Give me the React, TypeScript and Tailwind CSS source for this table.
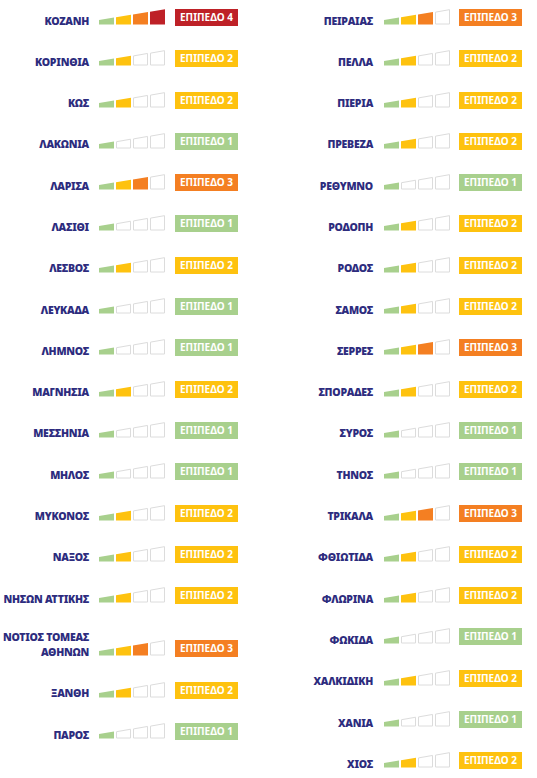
const levelColors = ["#a8d08d", "#fec20f", "#f47f22", "#be2127"]

type Area = { name: string; level: number }

const leftAreas: Area[] = [
  { name: "ΚΟΖΑΝΗ", level: 4 },
  { name: "ΚΟΡΙΝΘΙΑ", level: 2 },
  { name: "ΚΩΣ", level: 2 },
  { name: "ΛΑΚΩΝΙΑ", level: 1 },
  { name: "ΛΑΡΙΣΑ", level: 3 },
  { name: "ΛΑΣΙΘΙ", level: 1 },
  { name: "ΛΕΣΒΟΣ", level: 2 },
  { name: "ΛΕΥΚΑΔΑ", level: 1 },
  { name: "ΛΗΜΝΟΣ", level: 1 },
  { name: "ΜΑΓΝΗΣΙΑ", level: 2 },
  { name: "ΜΕΣΣΗΝΙΑ", level: 1 },
  { name: "ΜΗΛΟΣ", level: 1 },
  { name: "ΜΥΚΟΝΟΣ", level: 2 },
  { name: "ΝΑΞΟΣ", level: 2 },
  { name: "ΝΗΣΩΝ ΑΤΤΙΚΗΣ", level: 2 },
  { name: "ΝΟΤΙΟΣ ΤΟΜΕΑΣ\nΑΘΗΝΩΝ", level: 3 },
  { name: "ΞΑΝΘΗ", level: 2 },
  { name: "ΠΑΡΟΣ", level: 1 },
]

const rightAreas: Area[] = [
  { name: "ΠΕΙΡΑΙΑΣ", level: 3 },
  { name: "ΠΕΛΛΑ", level: 2 },
  { name: "ΠΙΕΡΙΑ", level: 2 },
  { name: "ΠΡΕΒΕΖΑ", level: 2 },
  { name: "ΡΕΘΥΜΝΟ", level: 1 },
  { name: "ΡΟΔΟΠΗ", level: 2 },
  { name: "ΡΟΔΟΣ", level: 2 },
  { name: "ΣΑΜΟΣ", level: 2 },
  { name: "ΣΕΡΡΕΣ", level: 3 },
  { name: "ΣΠΟΡΑΔΕΣ", level: 2 },
  { name: "ΣΥΡΟΣ", level: 1 },
  { name: "ΤΗΝΟΣ", level: 1 },
  { name: "ΤΡΙΚΑΛΑ", level: 3 },
  { name: "ΦΘΙΩΤΙΔΑ", level: 2 },
  { name: "ΦΛΩΡΙΝΑ", level: 2 },
  { name: "ΦΩΚΙΔΑ", level: 1 },
  { name: "ΧΑΛΚΙΔΙΚΗ", level: 2 },
  { name: "ΧΑΝΙΑ", level: 1 },
  { name: "ΧΙΟΣ", level: 2 },
]

// rising wedge split into 4 bars
function LevelBars({ level }: { level: number }) {
  const base = 15.5
  const h = (x: number) => 4.5 + (x * 11) / 67
  return (
    <svg width="68" height="17" viewBox="0 0 68 17" className="shrink-0">
      {[0, 1, 2, 3].map((i) => {
        const x0 = i * 17
        const x1 = x0 + 15
        if (i < level) {
          return (
            <polygon
              key={i}
              points={`${x0},${base} ${x1},${base} ${x1},${base - h(x1)} ${x0},${base - h(x0)}`}
              fill={levelColors[i]}
            />
          )
        }
        return (
          <polygon
            key={i}
            points={`${x0 + 0.5},${base - 0.5} ${x1 - 0.5},${base - 0.5} ${x1 - 0.5},${base - h(x1) + 0.5} ${x0 + 0.5},${base - h(x0) + 0.5}`}
            fill="#fff"
            stroke="#dcdcdc"
            strokeWidth="1"
          />
        )
      })}
    </svg>
  )
}

function AreaRow({ area, barGap, badgeGap }: { area: Area; barGap: string; badgeGap: string }) {
  return (
    <div className="flex items-end">
      <div className="flex w-[89px] shrink-0 justify-end">
        <span className="translate-y-[2px] whitespace-pre text-right text-[10.5px] leading-[14.5px] font-black tracking-[-0.25px] text-[#2d2c7e]">
          {area.name}
        </span>
      </div>
      <div className={barGap}>
        <LevelBars level={area.level} />
      </div>
      <div
        className={`${badgeGap} flex h-[17px] w-[63px] shrink-0 items-center justify-center text-[10px] font-bold text-white`}
        style={{ backgroundColor: levelColors[area.level - 1] }}
      >
        ΕΠΙΠΕΔΟ {area.level}
      </div>
    </div>
  )
}

export default function App() {
  return (
    <div
      className="flex h-[778px] w-[537px] overflow-hidden bg-white pt-[9px]"
      style={{ fontFamily: '"Noto Sans", "DejaVu Sans", sans-serif' }}
    >
      <div className="flex w-[284px] shrink-0 flex-col gap-[24.3px]">
        {leftAreas.map((a) => (
          <AreaRow key={a.name} area={a} barGap="ml-[10px]" badgeGap="ml-[8px]" />
        ))}
      </div>
      <div className="flex flex-col gap-[24.3px]">
        {rightAreas.map((a) => (
          <AreaRow key={a.name} area={a} barGap="ml-[11px]" badgeGap="ml-[7px]" />
        ))}
      </div>
    </div>
  )
}
